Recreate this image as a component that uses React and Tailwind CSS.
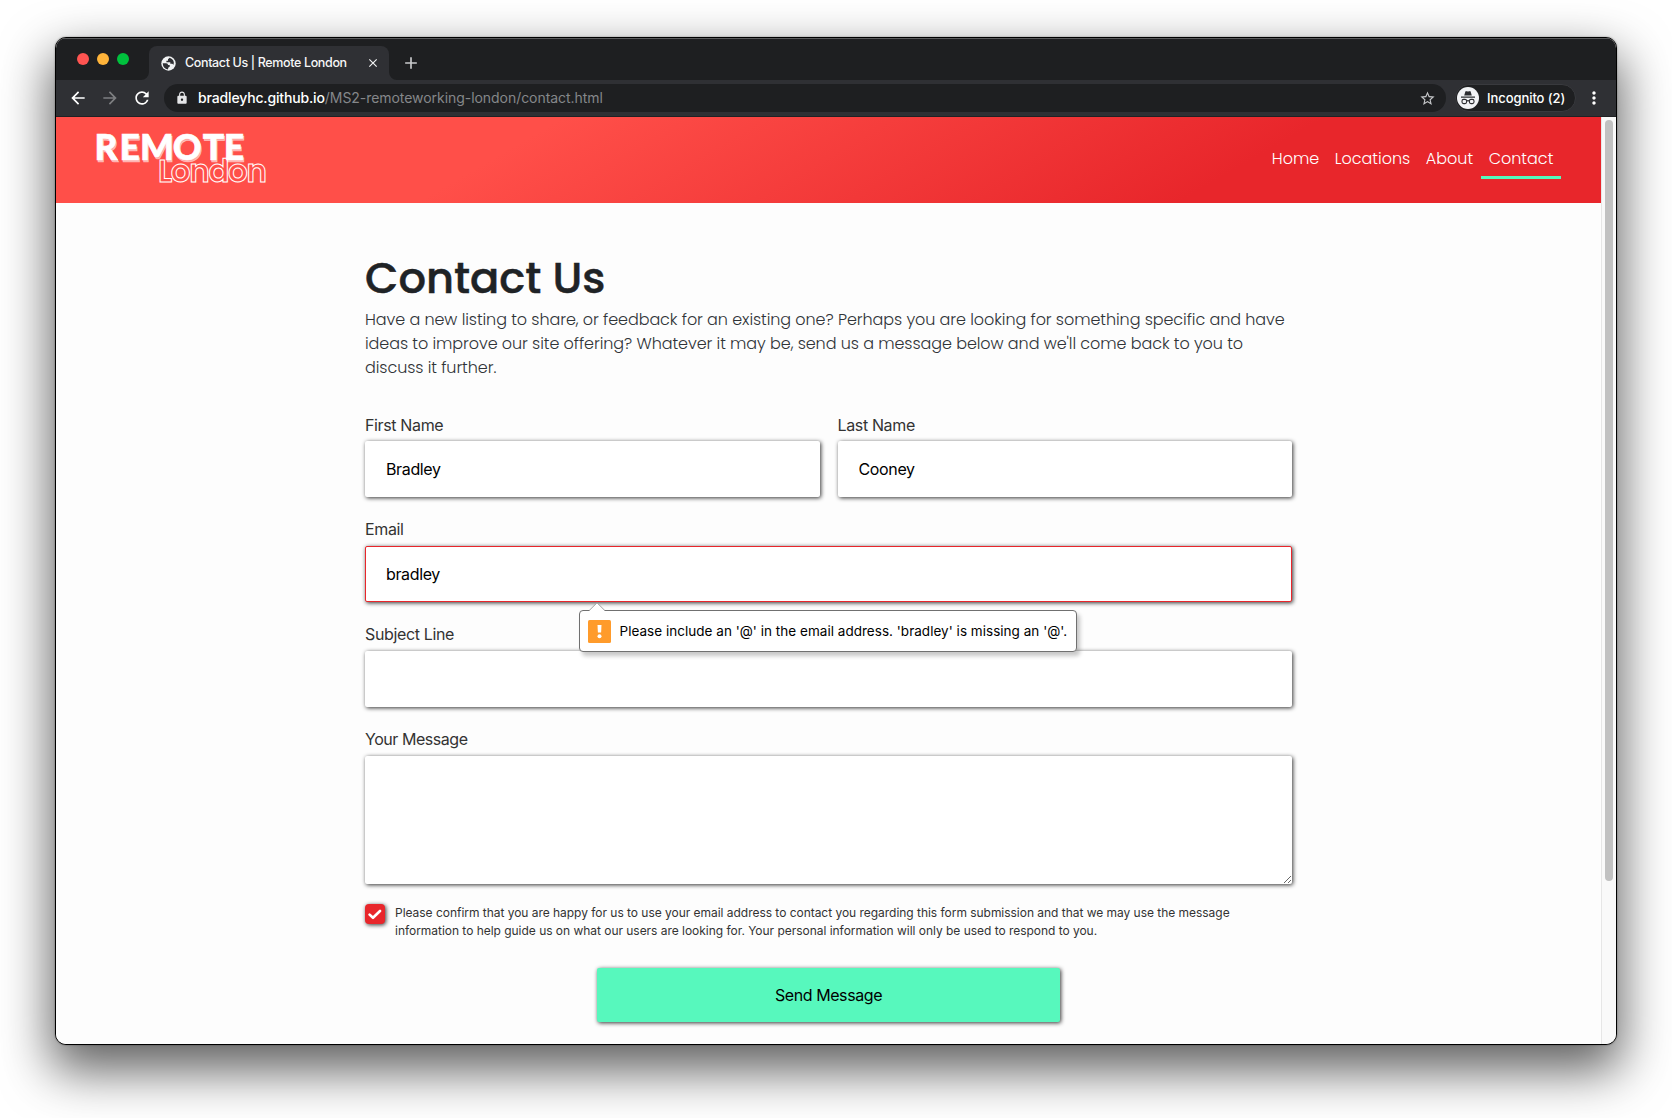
import React from "react";
import {
  MdArrowBack,
  MdArrowForward,
  MdRefresh,
  MdLock,
  MdStarBorder,
  MdClose,
  MdAdd,
  MdMoreVert,
} from "react-icons/md";

const geometric = "font-['Poppins','Inter',sans-serif]";
const boxShadow = "shadow-[1px_1px_4px_rgba(0,0,0,0.8)]";

function Globe() {
  return (
    <svg width="15" height="15" viewBox="0 0 15 15" className="shrink-0">
      <circle cx="7.5" cy="7.5" r="7.2" fill="#f1f3f4" />
      <path
        d="M1.7 7.2h3.4q1.9.2 2 1.7h1.6v1.9q-1.7.2-1.8 2.6Q2 12.6 1.7 7.2z"
        fill="#2f3034"
      />
      <path
        d="M8.6 1.8 7 3.2v1.5H5.4v1.5h3.9v1.6h1.9q.9.3 1.2 1.3 1.9-4.9-3.8-7.3z"
        fill="#2f3034"
      />
    </svg>
  );
}

function TabStrip() {
  return (
    <div className="flex h-[42px] items-end bg-[#1e1f21] pl-[21px] shadow-[inset_0_1px_0_#5a5b5c]">
      <div className="mb-[15px] flex gap-2">
        <span className="size-3 rounded-full bg-[#ff5451]" />
        <span className="size-3 rounded-full bg-[#ffb43a]" />
        <span className="size-3 rounded-full bg-[#00c13d]" />
      </div>
      <svg width="8" height="8" viewBox="0 0 8 8" className="ml-[12px]">
        <path d="M8 0v8H0a8 8 0 0 0 8-8z" fill="#2f3034" />
      </svg>
      <div className="flex h-[34px] w-[240px] items-center rounded-t-lg bg-[#2f3034] pl-[12px] pr-[9px]">
        <Globe />
        <span className="ml-[9px] whitespace-nowrap font-['Inter',sans-serif] text-[12.5px] font-medium leading-4 tracking-[-0.36px] text-[#f6f6f7]">
          Contact Us | Remote London
        </span>
        <MdClose className="ml-auto size-[14px] shrink-0 text-[#f1f2f3]" />
      </div>
      <svg width="8" height="8" viewBox="0 0 8 8">
        <path d="M0 0v8h8a8 8 0 0 1-8-8z" fill="#2f3034" />
      </svg>
      <MdAdd className="mb-[7px] ml-[4px] size-5 text-[#c9cacc]" />
    </div>
  );
}

function Incognito() {
  return (
    <svg width="22" height="22" viewBox="0 0 22 22" className="shrink-0">
      <circle cx="11" cy="11" r="11" fill="#f1f2f5" />
      <path d="M7.2 8.6 8.4 4.6q.3-.7 1-.4l1.6.4 1.6-.4q.7-.3 1 .4l1.2 4z" fill="#2b2c30" />
      <path d="M4 9.6h14v1.2H4z" fill="#2b2c30" />
      <g fill="none" stroke="#2b2c30" strokeWidth="1.1">
        <rect x="5" y="12.4" width="4.6" height="4.2" rx="1.6" />
        <rect x="12.4" y="12.4" width="4.6" height="4.2" rx="1.6" />
        <path d="M9.6 14q1.4-.8 2.8 0" />
      </g>
    </svg>
  );
}

function Toolbar() {
  return (
    <div className="flex h-[37px] items-center border-b border-[#202124] bg-[#2f3034] pl-[12px] pr-[12px]">
      <MdArrowBack className="size-5 text-white" />
      <MdArrowForward className="ml-[12px] size-5 text-[#7d7e81]" />
      <MdRefresh className="ml-[12px] size-5 text-white" />
      <div className="ml-[12px] flex h-7 w-[1282px] items-center rounded-full bg-[#1e1f21] pl-[11px] pr-[10px]">
        <MdLock className="size-[14px] text-[#e4e5e7]" />
        <span className="ml-[9px] whitespace-nowrap font-['Inter',sans-serif] text-[14px] leading-5 tracking-[-0.05px] text-[#85878a]">
          <span className="font-medium tracking-[-0.15px] text-white">bradleyhc.github.io</span>/MS2-remoteworking-london/contact.html
        </span>
        <MdStarBorder className="ml-auto size-[17px] text-[#c4c5c8]" />
      </div>
      <div className="ml-[9px] flex h-7 w-[121px] items-center rounded-full border border-[#393a3e] bg-[#1e1f21] pl-px">
        <Incognito />
        <span className="ml-2 whitespace-nowrap font-['Inter',sans-serif] text-[13px] font-medium leading-5 tracking-[-0.07px] text-white">
          Incognito (2)
        </span>
      </div>
      <MdMoreVert className="ml-auto size-5 text-white" />
    </div>
  );
}

function Logo() {
  return (
    <svg width="180" height="60" viewBox="0 0 180 60" className="overflow-visible">
      <text
        x="2.4 27.6 48 80.8 110.8 131.8"
        y="35"
        fontFamily="Lato, sans-serif"
        fontWeight="900"
        fontSize="35.5"
        fill="#ffffff"
        stroke="#ffffff"
        strokeWidth="0.6"
        className="[text-shadow:1px_1.5px_0_rgba(255,255,255,0.5)]"
      >
        REMOTE
      </text>
      <text
        x="66"
        y="56.5"
        textLength="109"
        fontFamily="Poppins, Inter, sans-serif"
        fontWeight="600"
        fontSize="31"
        fill="none"
        stroke="#ffffff"
        strokeWidth="1"
      >
        London
      </text>
    </svg>
  );
}

function NavLink({ children, width, active }) {
  return (
    <a
      className={
        "flex h-[41px] justify-center border-b-[3px] pt-[9px] text-[16px] font-light leading-6 text-white " +
        width +
        (active ? " border-[#55f8bd]" : " border-transparent")
      }
    >
      {children}
    </a>
  );
}

function SiteHeader() {
  return (
    <header className="flex h-[86px] items-start justify-between bg-[linear-gradient(150deg,#ff4f49_30%,#e8262b_75%)] pl-[36px] pr-[40px]">
      <div className="pt-[8px]">
        <Logo />
      </div>
      <nav className={"flex pt-[21px] " + geometric}>
        <NavLink width="w-[63px]">Home</NavLink>
        <NavLink width="w-[91px]">Locations</NavLink>
        <NavLink width="w-[63px]">About</NavLink>
        <NavLink width="w-[80px]" active>Contact</NavLink>
      </nav>
    </header>
  );
}

function Field({ label, value = "", invalid, tall, children }) {
  return (
    <label className="relative block">
      <span
        className={
          "block text-[16px] leading-6 tracking-[-0.36px] text-[#333333] " + (tall ? "h-[29px]" : "h-[28px]")
        }
      >
        {label}
      </span>
      <input
        readOnly
        value={value}
        className={
          "block h-[56px] w-full rounded-[2px] border bg-white px-5 text-[16px] tracking-[-0.36px] text-black outline-none " +
          boxShadow +
          (invalid ? " border-[#e8262b]" : " border-transparent")
        }
      />
      {children}
    </label>
  );
}

function ValidationBubble() {
  return (
    <div className="absolute left-[214px] top-[93px] z-10 flex h-[42px] w-[498px] items-center rounded-[4px] border border-[#707070] bg-white pl-[8px] shadow-[3px_4px_4px_rgba(0,0,0,0.22)]">
      <svg width="18" height="10" viewBox="0 0 18 10" className="absolute -top-[9px] left-[8px]">
        <path d="M1 9 9 1l8 8v1H1z" fill="#ffffff" />
        <path d="M1 8.7 9 .8l8 7.9" fill="none" stroke="#a0a0a0" />
      </svg>
      <svg width="23" height="23" viewBox="0 0 23 23">
        <rect width="23" height="23" rx="1.5" fill="#ff9b2b" />
        <path d="M9.5 5h4l-.4 7.6H9.9z" fill="#ffffff" />
        <circle cx="11.5" cy="16.3" r="2" fill="#ffffff" />
      </svg>
      <span className="ml-[8.5px] whitespace-nowrap text-[13.5px] leading-5 tracking-[0.025px] text-black">
        Please include an '@' in the email address. 'bradley' is missing an '@'.
      </span>
    </div>
  );
}

function ContactPage() {
  return (
    <main className="h-full flex-1 overflow-hidden bg-[#fdfdfd]">
      <SiteHeader />
      <div className="ml-[309px] w-[927px] pt-[49px] font-['Inter',sans-serif]">
        <h1
          className={
            "h-[56px] whitespace-nowrap text-[43.2px] font-medium leading-[52px] text-[#1f2326] [-webkit-text-stroke:0.5px_#1f2326] " +
            geometric
          }
        >
          Contact Us
        </h1>
        <p
          className={
            "h-[105px] whitespace-nowrap text-[16px] font-light leading-6 tracking-[-0.073px] text-[#303438] " + geometric
          }
        >
          <span className="block">Have a new listing to share, or feedback for an existing one? Perhaps you are looking for something specific and have</span>
          <span className="block">ideas to improve our site offering? Whatever it may be, send us a message below and we'll come back to you to</span>
          <span className="block">discuss it further.</span>
        </p>
        <form className="flex flex-col gap-[20px]">
          <div className="grid grid-cols-2 gap-[18px]">
            <Field label="First Name" value="Bradley" />
            <Field label="Last Name" value="Cooney" />
          </div>
          <Field label="Email" value="bradley" invalid tall>
            <ValidationBubble />
          </Field>
          <Field label="Subject Line" tall />
          <label className="block">
            <span className="block h-[29px] text-[16px] leading-6 tracking-[-0.45px] text-[#333333]">Your Message</span>
            <textarea
              readOnly
              className={"block h-[128px] w-full resize rounded-[2px] bg-white outline-none " + boxShadow}
            />
          </label>
          <div className="flex items-start">
            <span className={"flex size-[20px] shrink-0 items-center justify-center rounded-[4px] bg-[#e8262b] " + boxShadow}>
              <svg width="14" height="11" viewBox="0 0 14 11">
                <path d="M1.6 5.6 5 8.8l7-6.8" fill="none" stroke="#ffffff" strokeWidth="2.6" strokeLinecap="round" strokeLinejoin="round" />
              </svg>
            </span>
            <p className="ml-[10px] whitespace-nowrap text-[12px] leading-[18px] tracking-[-0.03px] text-[#333333]">
              <span className="block">Please confirm that you are happy for us to use your email address to contact you regarding this form submission and that we may use the message</span>
              <span className="block">information to help guide us on what our users are looking for. Your personal information will only be used to respond to you.</span>
            </p>
          </div>
          <button
            type="button"
            className={"mx-auto mt-[8px] h-[54px] w-[463px] rounded-[2px] bg-[#57f8bd] text-[16px] tracking-[-0.42px] text-black " + boxShadow}
          >
            Send Message
          </button>
        </form>
      </div>
    </main>
  );
}

export default function App() {
  return (
    <div className="h-[1118px] w-[1672px] overflow-hidden bg-white pl-[55px] pt-[37px]">
      <div className="flex h-[1008px] w-[1562px] flex-col overflow-hidden rounded-[11px] border border-black bg-[#fdfdfd] shadow-[0_22px_50px_4px_rgba(0,0,0,0.62),0_0_2px_rgba(0,0,0,0.4)]">
        <TabStrip />
        <Toolbar />
        <div className="flex min-h-0 flex-1">
          <ContactPage />
          <div className="w-[15px] border-l border-[#e6e6e6] bg-[#f9f9f9] pl-[3px] pt-[3px]">
            <div className="h-[761px] w-2 rounded-full bg-[#c1c1c1]" />
          </div>
        </div>
      </div>
    </div>
  );
}
